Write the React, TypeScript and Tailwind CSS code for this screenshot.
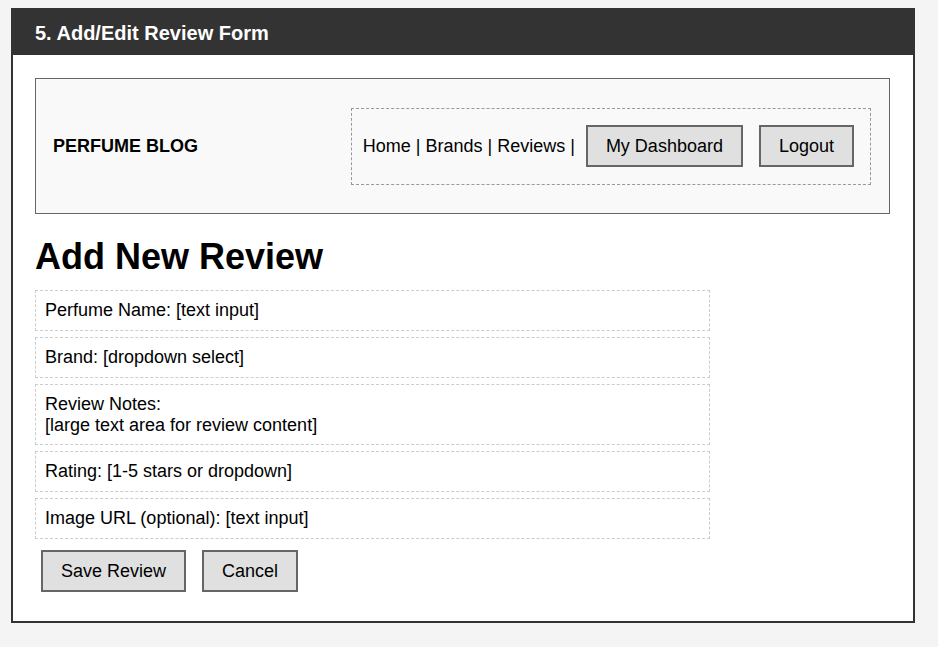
import React from 'react';

const App = () => {
  // form placeholder rows
  const fields = [
    ['Perfume Name: [text input]'],
    ['Brand: [dropdown select]'],
    ['Review Notes:', '[large text area for review content]'],
    ['Rating: [1-5 stars or dropdown]'],
    ['Image URL (optional): [text input]'],
  ];

  const btn =
    'h-[42px] px-[18px] border-2 border-[#666] bg-[#e0e0e0] text-[18px] text-black leading-none';

  return (
    <div className="min-h-[647px] bg-[#f4f4f4] pt-2 pl-[11px] font-['Liberation_Sans',Arial,sans-serif] text-black">
      <div className="w-[904px] border-2 border-[#333] bg-white">
        <div className="bg-[#333] h-[45px] flex items-center px-[22px]">
          <h2 className="text-[20px] font-bold text-white">5. Add/Edit Review Form</h2>
        </div>

        <div className="pl-[22px] pr-[23px] pt-[23px] pb-[29px]">
          <div className="h-[136px] flex items-center justify-between pl-[17px] pr-[18px] border border-[#666] bg-[#f9f9f9]">
            <div className="text-[18px] font-bold">PERFUME BLOG</div>
            <div className="h-[77px] flex items-center pl-[11px] pr-4 border border-dashed border-[#999]">
              <span className="text-[18px] whitespace-pre">Home | Brands | Reviews |</span>
              <button className={`${btn} ml-[11px]`}>My Dashboard</button>
              <button className={`${btn} ml-4`}>Logout</button>
            </div>
          </div>

          <h1 className="mt-[22px] mb-3 text-[36px] font-bold leading-[normal]">Add New Review</h1>

          <div className="w-[675px] flex flex-col gap-[6px]">
            {fields.map((lines, i) => (
              <div
                key={i}
                className={`${lines.length > 1 ? 'h-[61px]' : 'h-[41px]'} border border-dashed border-[#ccc] px-[9px] py-[9px] text-[18px] leading-[21px]`}
              >
                {lines.map((l) => (
                  <div key={l}>{l}</div>
                ))}
              </div>
            ))}
          </div>

          <div className="flex gap-4 ml-[6px] mt-[11px]">
            <button className={btn}>Save Review</button>
            <button className={btn}>Cancel</button>
          </div>
        </div>
      </div>
    </div>
  );
};

export default App;
